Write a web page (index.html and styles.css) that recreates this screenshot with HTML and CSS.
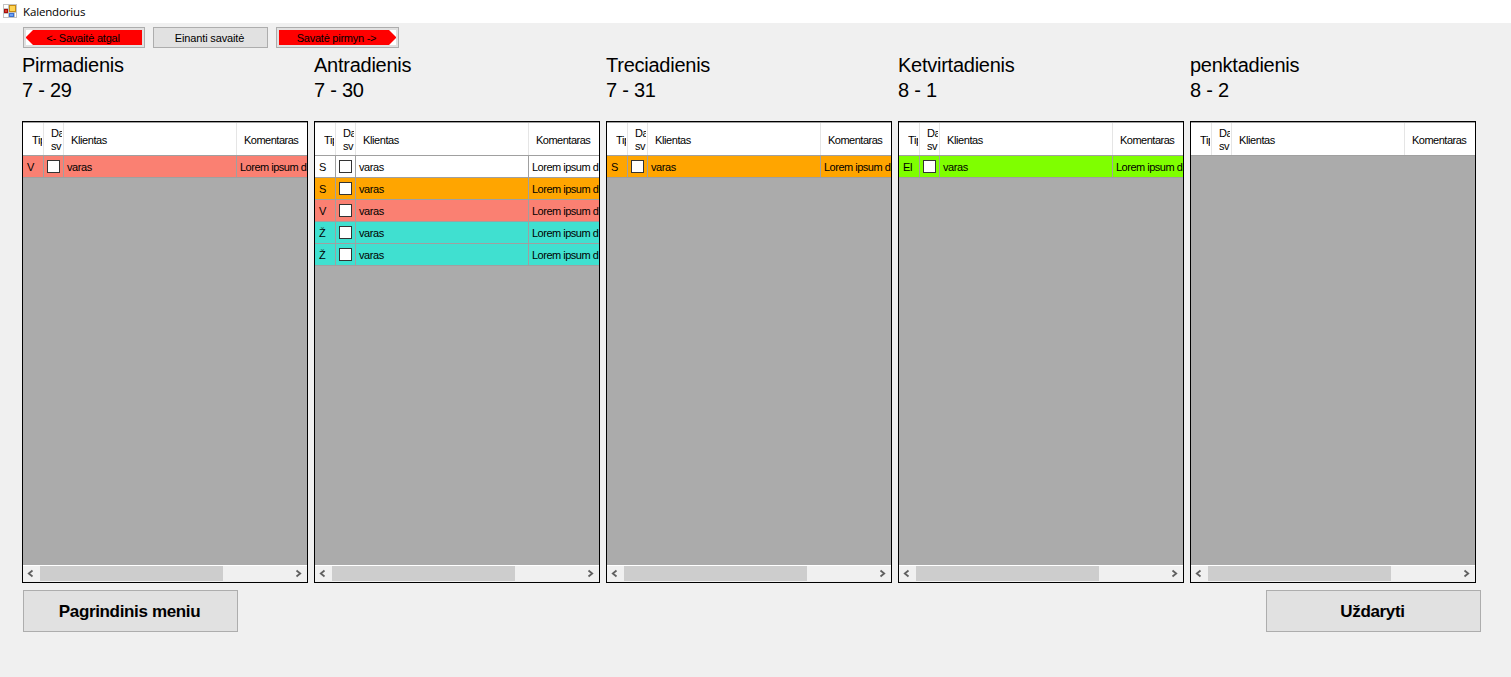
FILE: index.html
```html
<!DOCTYPE html>
<html lang="lt">
<head>
<meta charset="utf-8">
<title>Kalendorius</title>
<link rel="stylesheet" href="styles.css">
</head>
<body>
<header class="titlebar">
  <svg class="app-icon" width="14" height="14" viewBox="0 0 14 14" shape-rendering="crispEdges">
    <rect width="14" height="14" fill="#c3c3c3"/>
    <rect x="1" y="1" width="4" height="3" fill="#fff"/><rect x="1" y="10" width="4" height="3" fill="#fff"/>
    <rect x="1" y="5" width="4" height="4" fill="#a80f0b"/><rect x="2" y="6" width="2" height="2" fill="#d94030"/>
    <rect x="6" y="1" width="7" height="7" fill="#c58b13"/><rect x="7" y="2" width="5" height="5" fill="#ffd452"/>
    <rect x="6" y="9" width="5" height="4" fill="#3a6fd0"/><rect x="7" y="10" width="3" height="2" fill="#6fa2f4"/>
    <rect x="12" y="9" width="1" height="4" fill="#fff"/>
  </svg>
  <span>Kalendorius</span>
</header>
<main class="window">
  <nav class="toolbar">
    <button class="btn week-btn prev"><svg width="116" height="15"><rect width="8" height="15" fill="#fff"/><path d="M7 0H116V15H7L0 8V7Z" fill="#f00"/></svg><span>&lt;- Savaitė atgal</span></button>
    <button class="btn week-btn current"><span>Einanti savaitė</span></button>
    <button class="btn week-btn next"><svg width="117" height="15"><rect x="109" width="8" height="15" fill="#fff"/><path d="M0 0H110L117 7V8L110 15H0Z" fill="#f00"/></svg><span>Savatė pirmyn -&gt;</span></button>
  </nav>
  <div class="days">
    <section class="day">
      <h2>Pirmadienis<br>7 - 29</h2>
      <div class="grid">
        <div class="row head"><div>Tip</div><div>Da<br>sv</div><div>Klientas</div><div>Komentaras</div></div>
        <div class="row salmon"><div>V</div><div><i class="check"></i></div><div>varas</div><div>Lorem ipsum d</div></div>
        <div class="empty"></div>
        <div class="scroll"><svg width="17" height="16"><path d="M10.500 4.500L6.800 7.500L10.500 10.500"/></svg><div class="thumb"></div><svg width="17" height="16"><path d="M6.500 4.500L10.200 7.500L6.500 10.500"/></svg></div>
      </div>
    </section>
    <section class="day">
      <h2>Antradienis<br>7 - 30</h2>
      <div class="grid">
        <div class="row head"><div>Tip</div><div>Da<br>sv</div><div>Klientas</div><div>Komentaras</div></div>
        <div class="row white"><div>S</div><div><i class="check"></i></div><div>varas</div><div>Lorem ipsum d</div></div>
        <div class="row orange"><div>S</div><div><i class="check"></i></div><div>varas</div><div>Lorem ipsum d</div></div>
        <div class="row salmon"><div>V</div><div><i class="check"></i></div><div>varas</div><div>Lorem ipsum d</div></div>
        <div class="row turquoise"><div>Ž</div><div><i class="check"></i></div><div>varas</div><div>Lorem ipsum d</div></div>
        <div class="row turquoise"><div>Ž</div><div><i class="check"></i></div><div>varas</div><div>Lorem ipsum d</div></div>
        <div class="empty"></div>
        <div class="scroll"><svg width="17" height="16"><path d="M10.500 4.500L6.800 7.500L10.500 10.500"/></svg><div class="thumb"></div><svg width="17" height="16"><path d="M6.500 4.500L10.200 7.500L6.500 10.500"/></svg></div>
      </div>
    </section>
    <section class="day">
      <h2>Treciadienis<br>7 - 31</h2>
      <div class="grid">
        <div class="row head"><div>Tip</div><div>Da<br>sv</div><div>Klientas</div><div>Komentaras</div></div>
        <div class="row orange"><div>S</div><div><i class="check"></i></div><div>varas</div><div>Lorem ipsum d</div></div>
        <div class="empty"></div>
        <div class="scroll"><svg width="17" height="16"><path d="M10.500 4.500L6.800 7.500L10.500 10.500"/></svg><div class="thumb"></div><svg width="17" height="16"><path d="M6.500 4.500L10.200 7.500L6.500 10.500"/></svg></div>
      </div>
    </section>
    <section class="day">
      <h2>Ketvirtadienis<br>8 - 1</h2>
      <div class="grid">
        <div class="row head"><div>Tip</div><div>Da<br>sv</div><div>Klientas</div><div>Komentaras</div></div>
        <div class="row green"><div>El</div><div><i class="check"></i></div><div>varas</div><div>Lorem ipsum d</div></div>
        <div class="empty"></div>
        <div class="scroll"><svg width="17" height="16"><path d="M10.500 4.500L6.800 7.500L10.500 10.500"/></svg><div class="thumb"></div><svg width="17" height="16"><path d="M6.500 4.500L10.200 7.500L6.500 10.500"/></svg></div>
      </div>
    </section>
    <section class="day">
      <h2>penktadienis<br>8 - 2</h2>
      <div class="grid">
        <div class="row head"><div>Tip</div><div>Da<br>sv</div><div>Klientas</div><div>Komentaras</div></div>
        <div class="empty"></div>
        <div class="scroll"><svg width="17" height="16"><path d="M10.500 4.500L6.800 7.500L10.500 10.500"/></svg><div class="thumb"></div><svg width="17" height="16"><path d="M6.500 4.500L10.200 7.500L6.500 10.500"/></svg></div>
      </div>
    </section>
  </div>
  <footer class="actions">
    <button class="btn big">Pagrindinis meniu</button>
    <button class="btn big">Uždaryti</button>
  </footer>
</main>
</body>
</html>
```
FILE: styles.css
```css
* { box-sizing: border-box; }
body {
  margin: 0;
  height: 677px;
  overflow: hidden;
  background: #f0f0f0;
  color: #000;
  font: 11px/13px "Liberation Sans", Arial, sans-serif;
  letter-spacing: -0.4px;
}
.titlebar {
  display: flex;
  align-items: center;
  gap: 6px;
  height: 23px;
  padding-left: 3px;
  background: #fff;
  font: 11.5px/16px "Open Sans", "Noto Sans", sans-serif;
  letter-spacing: -0.15px;
}
.app-icon { display: block; margin-top: -1px; }
.window { padding: 4px 30px 0 22px; }
.toolbar { display: flex; gap: 8px; padding-left: 1px; height: 21px; }
.btn {
  padding: 0;
  border: 1px solid #adadad;
  background: #e1e1e1;
  color: #000;
  font: inherit;
  letter-spacing: inherit;
}
.week-btn { display: grid; place-items: center; height: 21px; }
.week-btn > * { grid-area: 1 / 1; }
.week-btn span { z-index: 1; padding: 1px 2px 0 0; }
.week-btn svg { justify-self: start; margin-left: 2px; }
.prev { width: 122px; letter-spacing: -0.2px; }
.current { width: 115px; letter-spacing: -0.15px; }
.next { width: 123px; letter-spacing: -0.25px; }
.days { display: flex; gap: 6px; margin-top: 4px; }
.day { width: 286px; }
.day h2 {
  height: 69px;
  margin: 0;
  padding-top: 1px;
  font-size: 20px;
  font-weight: 400;
  line-height: 25px;
  letter-spacing: -0.25px;
}
.grid {
  display: flex;
  flex-direction: column;
  width: 286px;
  height: 462px;
  border: 1px solid #000;
  background: #ababab;
  overflow: hidden;
}
.row {
  display: grid;
  grid-template-columns: 21px 20px 173px 70px;
  flex: none;
  height: 22px;
  border-bottom: 1px solid #a0a0a0;
}
.row > div {
  display: flex;
  align-items: center;
  overflow: hidden;
  padding-left: 3px;
  padding-top: 1px;
  border-right: 1px solid #a0a0a0;
  white-space: nowrap;
}
.row > div:first-child { padding-left: 4px; }
.row > div:last-child { border-right: 0; letter-spacing: -0.5px; }
.head { height: 34px; border-top: 1px solid #a0a0a0; background: #fff; }
.head > div { padding: 2px 0 0 7px; border-color: #e5e5e5; }
.head > div:first-child { padding-left: 9px; }
.head > div:first-child, .head > div:nth-child(2) {
  padding-right: 1px;
  overflow: clip;
  overflow-clip-margin: content-box;
}
.check { width: 13px; height: 13px; margin-top: -1px; border: 1px solid #333; background: #fff; }
.white { background: #fff; }
.salmon { background: #fa8072; }
.orange { background: #ffa500; }
.turquoise { background: #40e0d0; }
.green { background: #7fff00; }
.empty { flex: 1; }
.scroll { display: flex; flex: none; height: 17px; border-top: 1px solid #fff; background: #f0f0f0; }
.scroll svg { display: block; fill: none; stroke: #606060; stroke-width: 1.8; }
.scroll svg:first-child { margin: 0 1px 0 -1px; }
.scroll svg:last-child { margin: 0 0 0 auto; }
.thumb { width: 183px; height: 15px; background: #cdcdcd; }
.actions { display: flex; justify-content: space-between; margin-top: 7px; padding-left: 1px; }
.big { width: 215px; height: 42px; padding-right: 2px; font-size: 17px; font-weight: 700; letter-spacing: -0.35px; }
```
